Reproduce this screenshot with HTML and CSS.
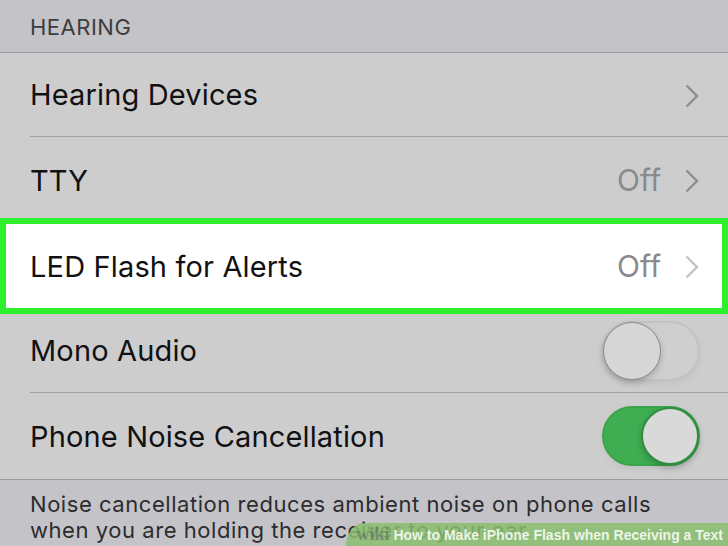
FILE: index.html
```html
<!DOCTYPE html>
<html>
<head>
<meta charset="utf-8">
<link rel="stylesheet" href="styles.css">
</head>
<body>
<div class="screen">
  <div class="section-header">HEARING</div>
  <div class="list">
    <div class="row">
      <div class="row-inner">
        <span class="label">Hearing Devices</span>
        <span class="accessory">
          <svg class="chev" viewBox="0 0 14 24" width="14" height="24"><path d="M1.5 1.5 L12 12 L1.5 22.5" fill="none" stroke="currentColor" stroke-width="2.4"/></svg>
        </span>
      </div>
    </div>
    <div class="row">
      <div class="row-inner">
        <span class="label">TTY</span>
        <span class="accessory">
          <span class="value">Off</span>
          <svg class="chev" viewBox="0 0 14 24" width="14" height="24"><path d="M1.5 1.5 L12 12 L1.5 22.5" fill="none" stroke="currentColor" stroke-width="2.4"/></svg>
        </span>
      </div>
    </div>
    <div class="row highlighted">
      <div class="row-inner">
        <span class="label">LED Flash for Alerts</span>
        <span class="accessory">
          <span class="value">Off</span>
          <svg class="chev light" viewBox="0 0 14 24" width="14" height="24"><path d="M1.5 1.5 L12 12 L1.5 22.5" fill="none" stroke="currentColor" stroke-width="2.4"/></svg>
        </span>
      </div>
    </div>
    <div class="row">
      <div class="row-inner">
        <span class="label">Mono Audio</span>
        <span class="toggle"><span class="knob"></span></span>
      </div>
    </div>
    <div class="row">
      <div class="row-inner last">
        <span class="label">Phone Noise Cancellation</span>
        <span class="toggle on"><span class="knob"></span></span>
      </div>
    </div>
  </div>
  <div class="section-footer">Noise cancellation reduces ambient noise on phone calls<br>when you are holding the receiver to your ear.</div>
  <div class="watermark"><span class="wiki">wiki</span><span class="how">How to Make iPhone Flash when Receiving a Text</span></div>
</div>
</body>
</html>
```

FILE: styles.css
```css
* { box-sizing: border-box; }
html, body { margin: 0; padding: 0; }
body {
  width: 728px;
  height: 546px;
  overflow: hidden;
  background: #c4c3c8;
  font-family: Inter, "Liberation Sans", sans-serif;
}
.screen {
  position: relative;
  width: 728px;
  height: 546px;
  overflow: hidden;
}
.section-header {
  height: 53px;
  padding: 14px 0 0 30px;
  font-size: 22px;
  line-height: 26px;
  color: #3d3d40;
  letter-spacing: 0.5px;
  border-bottom: 1px solid #9c9ca0;
}
.list {
  background: #cdcdcd;
  border-bottom: 1px solid #9c9ca0;
}
.row {
  height: 85px;
  padding-left: 30px;
  padding-bottom: 1px;
  display: flex;
}
.row-inner {
  flex: 1;
  display: flex;
  align-items: center;
  justify-content: space-between;
  padding-right: 29px;
  border-bottom: 1px solid #a2a2a5;
}
.row-inner.last { border-bottom: none; }
.row:nth-child(2) .row-inner { border-bottom: none; }
.row.highlighted {
  height: 96px;
  margin-top: -5px;
  margin-bottom: -5px;
  background: #ffffff;
  border: 6px solid #2ff02d;
  padding-left: 24px;
  padding-bottom: 0;
  position: relative;
}
.row.highlighted .row-inner {
  border-bottom: none;
  padding-right: 23px;
}
.label {
  font-size: 29px;
  color: #111113;
  letter-spacing: 0.15px;
}
.accessory {
  display: flex;
  align-items: center;
  gap: 24px;
}
.value {
  font-size: 30px;
  color: #8a8a8e;
}
.chev {
  display: block;
  color: #8e8e92;
  margin-top: 2px;
}
.chev.light { color: #c4c4c8; }
.toggle {
  position: relative;
  width: 98px;
  height: 60px;
  border-radius: 30px;
  border: 2px solid #c2c2c4;
  background: #cfcfcf;
  margin-right: -1px;
  box-shadow: 0 3px 6px rgba(0,0,0,0.05);
}
.toggle .knob {
  position: absolute;
  left: -1px;
  top: -1px;
  width: 58px;
  height: 58px;
  border-radius: 50%;
  background: #d6d6d6;
  border: 1px solid #8b8b8b;
  box-shadow: 0 3px 6px rgba(0,0,0,0.2);
}
.toggle.on {
  background: #3fad51;
  border-color: #3aa54c;
}
.toggle.on .knob {
  left: auto;
  right: -1px;
  border: 2px solid #2f8f3f;
  background: #d9d9d9;
}
.section-footer {
  padding: 11px 30px 0 30px;
  font-size: 22px;
  line-height: 26px;
  color: #2c2c2e;
  letter-spacing: 0.55px;
  white-space: nowrap;
}
.watermark {
  position: absolute;
  right: 0;
  bottom: 0;
  width: 382px;
  height: 23px;
  background: rgba(138, 190, 110, 0.85);
  border-top-left-radius: 18px 23px;
  display: flex;
  align-items: center;
  justify-content: flex-end;
  padding-right: 5px;
  font-family: "Liberation Sans", sans-serif;
  font-weight: bold;
  font-size: 14px;
  white-space: nowrap;
}
.watermark .wiki {
  color: rgba(90, 90, 90, 0.5);
  margin-right: 4px;
  font-family: "Liberation Serif", serif;
  font-size: 18px;
}
.watermark .how {
  color: rgba(255, 255, 255, 0.85);
}
```
